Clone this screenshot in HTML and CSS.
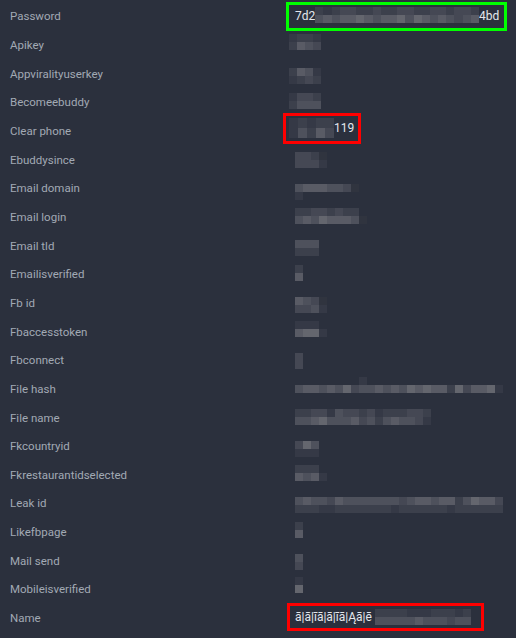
FILE: index.html
```html
<!DOCTYPE html>
<html lang="en">
  <head>
    <meta charset="UTF-8">
    <meta name="viewport" content="width=device-width, initial-scale=1.0">
    <title>Record details</title>
    <link rel="stylesheet" href="styles.css">
  </head>
  <body>
    <div class="record">
      <div class="row">
        <span class="label">Password</span>
        <span class="value box box-green">
          <span class="txt">7d2</span>
          <span class="mosaic" data-top="21233223223322332332" data-bottom="45455654556465454345" data-dy="-1"></span>
          <span class="txt">4bd</span>
        </span>
      </div>
      <div class="row">
        <span class="label">Apikey</span>
        <span class="value shift"><span class="mosaic" data-top="1221" data-bottom="2543" data-dy="-3"></span></span>
      </div>
      <div class="row">
        <span class="label">Appviralityuserkey</span>
        <span class="value shift"><span class="mosaic" data-top="2541" data-bottom="1232" data-dy="2"></span></span>
      </div>
      <div class="row">
        <span class="label">Becomeebuddy</span>
        <span class="value shift"><span class="mosaic" data-top="1332" data-bottom="2444" data-dy="-1"></span></span>
      </div>
      <div class="row">
        <span class="label">Clear phone</span>
        <span class="value box box-red box-phone">
          <span class="mosaic tall" data-top="12122" data-bottom="14253"></span>
          <span class="txt">119</span>
        </span>
      </div>
      <div class="row">
        <span class="label">Ebuddysince</span>
        <span class="value"><span class="mosaic" data-top="3320" data-bottom="3331"></span></span>
      </div>
      <div class="row">
        <span class="label">Email domain</span>
        <span class="value"><span class="mosaic" data-top="45554430" data-bottom="1" data-dy="4"></span></span>
      </div>
      <div class="row">
        <span class="label">Email login</span>
        <span class="value"><span class="mosaic" data-top="22332322" data-bottom="454655540" data-dy="-1"></span></span>
      </div>
      <div class="row">
        <span class="label">Email tld</span>
        <span class="value"><span class="mosaic" data-top="444" data-bottom="222" data-dy="2"></span></span>
      </div>
      <div class="row">
        <span class="label">Emailisverified</span>
        <span class="value"><span class="mosaic" data-top="2" data-bottom="5" data-dy="-1"></span></span>
      </div>
      <div class="row">
        <span class="label">Fb id</span>
        <span class="value"><span class="mosaic" data-top="5430" data-bottom="3341" data-dy="2"></span></span>
      </div>
      <div class="row">
        <span class="label">Fbaccesstoken</span>
        <span class="value"><span class="mosaic" data-top="111" data-bottom="5661" data-dy="-3"></span></span>
      </div>
      <div class="row">
        <span class="label">Fbconnect</span>
        <span class="value"><span class="mosaic" data-top="3" data-bottom="3" data-dy="1"></span></span>
      </div>
      <div class="row">
        <span class="label">File hash</span>
        <span class="value"><span class="mosaic" data-top="........1" data-bottom="45545463445454656552635561" data-dy="-4"></span></span>
      </div>
      <div class="row">
        <span class="label">File name</span>
        <span class="value"><span class="mosaic" data-top="22331433231222332" data-bottom="44564445342454431" data-dy="-1"></span></span>
      </div>
      <div class="row">
        <span class="label">Fkcountryid</span>
        <span class="value"><span class="mosaic" data-top="364" data-bottom="111" data-dy="3"></span></span>
      </div>
      <div class="row">
        <span class="label">Fkrestaurantidselected</span>
        <span class="value"><span class="mosaic" data-top="222" data-bottom="5451" data-dy="-2"></span></span>
      </div>
      <div class="row">
        <span class="label">Leak id</span>
        <span class="value"><span class="mosaic" data-top="45443544444443455455246553" data-bottom="22211222222212222221222222" data-dy="2"></span></span>
      </div>
      <div class="row">
        <span class="label">Likefbpage</span>
        <span class="value"><span class="mosaic" data-top="2" data-bottom="5" data-dy="-2"></span></span>
      </div>
      <div class="row">
        <span class="label">Mail send</span>
        <span class="value"><span class="mosaic" data-top="4" data-bottom="3" data-dy="1"></span></span>
      </div>
      <div class="row">
        <span class="label">Mobileisverified</span>
        <span class="value"><span class="mosaic" data-top="1" data-bottom="6" data-dy="-4"></span></span>
      </div>
      <div class="row">
        <span class="label">Name</span>
        <span class="value box box-red box-name">
          <span class="txt">ā|ā|īā|ā|īā|Ąā|ē</span>
          <span class="mosaic" data-top="222211122212" data-bottom="444445444344"></span>
        </span>
      </div>
    </div>
    <script src="mosaic.js"></script>
  </body>
</html>
```

FILE: styles.css
```css
body, html {
  margin: 0;
  padding: 0;
  background-color: #2b303d;
  font-family: Roboto, 'Liberation Sans', sans-serif;
  color: #a2a9b4;
}

.record {
  padding-top: 2px;
}

.row {
  display: flex;
  align-items: center;
  height: 28.667px;
}

.label {
  width: 295px;
  flex: none;
  padding-left: 10px;
  box-sizing: border-box;
  font-size: 11.5px;
}

.value {
  display: flex;
  align-items: center;
  color: #e4e7ec;
  font-size: 12px;
}

.shift {
  margin-left: -6px;
}

.box {
  box-sizing: border-box;
  border: 3px solid;
}

.box-green {
  border-color: #00ff00;
  width: 221px;
  height: 29px;
  margin-left: -9px;
  padding-left: 6px;
}

.box-red {
  border-color: #ff0000;
}

.box-phone {
  width: 78px;
  height: 31px;
  margin-left: -12px;
  margin-top: -5px;
  padding-left: 3px;
}

.box-name {
  width: 197px;
  height: 28px;
  margin-left: -8px;
  margin-top: -2px;
  padding-left: 5px;
}

.txt {
  line-height: 14px;
}

.box-name .txt {
  margin-right: 3px;
}

.mosaic {
  display: flex;
  flex-direction: column;
}

.mosaic-row {
  display: flex;
  height: 8px;
}

.mosaic.tall .mosaic-row {
  height: 10px;
}

.cell {
  width: 8px;
  height: 100%;
  flex: none;
}

.box-green .cell {
  width: 8.2px;
}

.box-phone .cell {
  width: 9px;
}
```

FILE: mosaic.js
```js
// fills the blurred values with pixel cells
var shades = ['#30343f', '#353946', '#3c404c', '#454854', '#4e515c', '#595b65', '#64666e', '#707279'];

document.querySelectorAll('.mosaic').forEach(function (el) {
  ['top', 'bottom'].forEach(function (key) {
    var row = document.createElement('div');
    row.className = 'mosaic-row';
    var pattern = el.dataset[key] || '';
    for (var i = 0; i < pattern.length; i++) {
      var cell = document.createElement('span');
      cell.className = 'cell';
      var ch = pattern[i];
      if (ch !== '.') cell.style.background = shades[+ch];
      row.appendChild(cell);
    }
    el.appendChild(row);
  });
  if (el.dataset.dy) el.style.transform = 'translateY(' + el.dataset.dy + 'px)';
});
```
